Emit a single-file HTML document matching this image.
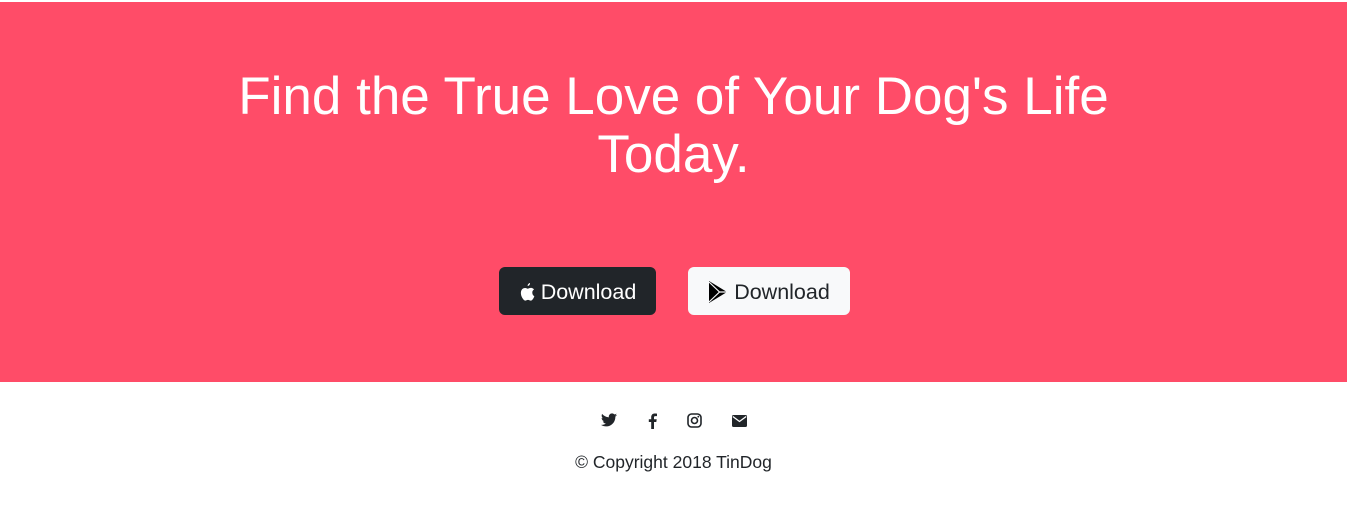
<!DOCTYPE html>
<html><head><style>
body{margin:0;background:#fff;font-family:"Liberation Sans",sans-serif;}
.hero{position:absolute;top:2px;left:0;width:1347px;height:380px;background:#ff4c68;}
h1{position:absolute;top:66px;left:0;width:1347px;margin:0;text-align:center;color:#fff;font-weight:normal;font-size:53px;line-height:58px;}
.btn{position:absolute;top:265px;height:48px;border-radius:6px;font-size:21.5px;display:flex;align-items:center;justify-content:center;gap:6px;box-sizing:border-box;padding-top:2px;}
.b1{left:499px;width:157px;background:#212529;color:#fff;}
.b2{left:688px;width:162px;background:#f8f9fa;color:#212529;}
.icons{position:absolute;top:413px;left:0;width:1347px;}
.icons svg{position:absolute;}
.copy{position:absolute;top:452px;left:0;width:1347px;text-align:center;font-size:17.5px;color:#212529;}
</style></head><body>
<div class="hero">
<h1>Find the True Love of Your Dog's Life<br>Today.</h1>
<div class="btn b1"><svg width="16" height="18" viewBox="0 0 16 18"><path fill="#fff" d="M11 0c.2 1.3-.9 2.9-2.3 3C8.5 1.7 9.6.2 11 0zM13.3 9.5c0-2 1.6-2.9 1.7-3-1-1.4-2.5-1.6-3-1.6-1.3-.1-2.5.8-3.1.8-.7 0-1.7-.8-2.8-.7C4.6 5 3.3 5.8 2.6 7c-1.5 2.600-.4 6.400 1.100 8.500.7 1 1.500 2.200 2.600 2.100 1 0 1.400-.7 2.700-.7s1.600.7 2.700.7c1.100 0 1.800-1 2.500-2 .8-1.200 1.100-2.300 1.100-2.400 0 0-2-.8-2-3.700z"/></svg>Download</div>
<div class="btn b2"><svg width="20" height="22" viewBox="0 0 20 22"><path fill="#000" d="M1 0L19 11 1 22z"/><path fill="none" stroke="#f8f9fa" stroke-width="1.2" d="M1 1L11.5 11 1 21M11.5 11L19 11"/></svg>Download</div>
</div>
<div class="icons">
<svg style="left:601px" width="16" height="14" viewBox="0 0 24 20"><path fill="#212529" d="M24 2.4c-.9.4-1.8.6-2.8.8 1-.6 1.8-1.6 2.2-2.7-1 .6-2 1-3.1 1.2C19.3.7 18 0 16.6 0c-2.7 0-4.9 2.2-4.9 4.9 0 .4 0 .8.1 1.1C7.7 5.8 4.1 3.9 1.7.9c-.4.7-.7 1.6-.7 2.5 0 1.7.9 3.2 2.2 4.1-.8 0-1.6-.2-2.2-.6v.1c0 2.4 1.7 4.4 3.9 4.8-.4.1-.8.2-1.3.2-.3 0-.6 0-.9-.1.6 2 2.4 3.4 4.6 3.4-1.7 1.3-3.8 2.1-6.1 2.1-.4 0-.8 0-1.2-.1C2.2 18.8 4.8 19.6 7.5 19.6c9.1 0 14-7.5 14-14v-.6c1-.7 1.8-1.6 2.5-2.6z"/></svg>
<svg style="left:648px" width="9" height="16" viewBox="0 0 9 16"><path fill="#212529" d="M6 16V9h2.3l.4-2.8H6V4.4c0-.8.2-1.3 1.4-1.3H9V.6C8.7.6 7.8.5 6.8.5 4.7.5 3.2 1.8 3.2 4.1v2.1H.8V9h2.4v7z"/></svg>
<svg style="left:687px" width="15" height="15" viewBox="0 0 15 15"><rect x="1" y="1" width="13" height="13" rx="3.5" fill="none" stroke="#212529" stroke-width="1.6"/><circle cx="7.5" cy="7.5" r="3" fill="none" stroke="#212529" stroke-width="1.6"/><circle cx="11.3" cy="3.7" r=".9" fill="#212529"/></svg>
<svg style="left:732px;top:2px" width="15" height="12" viewBox="0 0 15 12"><rect x="0" y="0" width="15" height="12" rx="1.5" fill="#212529"/><path d="M0.8 1.5l6.7 5 6.7-5" fill="none" stroke="#fff" stroke-width="1.3"/></svg>
</div>
<div class="copy">© Copyright 2018 TinDog</div>
</body></html>
